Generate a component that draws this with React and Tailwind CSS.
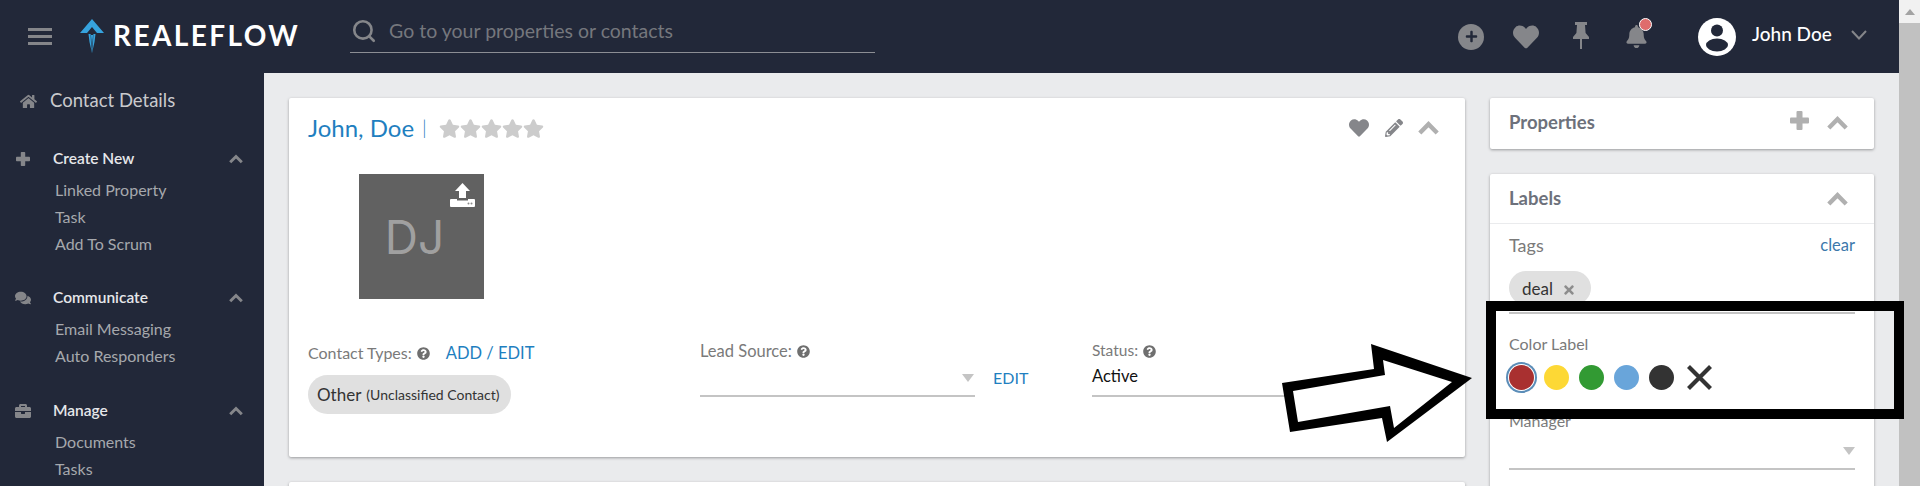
import React from "react";
import { FaHome, FaPlus, FaComments, FaBriefcase, FaStar, FaHeart, FaPencilAlt, FaQuestionCircle, FaBell, FaTimes } from "react-icons/fa";
import { Search } from "lucide-react";

const font = { fontFamily: "Lato, 'Noto Sans', sans-serif" };

function Chevron({ className }) {
  return (
    <svg viewBox="0 0 21 14" className={className} fill="none" stroke="currentColor" strokeWidth="4.4">
      <polyline points="1.8,12 10.5,3.2 19.2,12" />
    </svg>
  );
}

function Plus({ className }) {
  return (
    <svg viewBox="0 0 19 19" className={className} fill="currentColor">
      <rect x="6.5" y="0" width="6" height="19" rx="1" />
      <rect x="0" y="6.5" width="19" height="6" rx="1" />
    </svg>
  );
}

function SideGroup({ icon, title, items, className }) {
  return (
    <div className={className}>
      <div className="flex h-[26px] items-center pr-[21px]">
        <span className="flex w-[53px] justify-center pr-[7px] text-[#85868a]">{icon}</span>
        <span className="flex-1 text-[15.5px] font-semibold text-[#e6e7ea]">{title}</span>
        <Chevron className="h-[10px] w-[14px] text-[#85868a]" />
      </div>
      <ul className="mt-[4px] pl-[55px]">
        {items.map((t) => (
          <li key={t} className="h-[27px] text-[16px] leading-[27px] text-[#a6a8ad]">{t}</li>
        ))}
      </ul>
    </div>
  );
}

function Help() {
  return <FaQuestionCircle className="ml-[5px] text-[13px] text-[#6f6f6f]" />;
}

function Tri() {
  return <span className="h-0 w-0 border-x-[6px] border-t-[8px] border-x-transparent border-t-[#c4c4c4]" />;
}

function Logo() {
  return (
    <svg width="24" height="34" viewBox="0 0 24 34" className="shrink-0">
      <path d="M12 0 L24 14 L17 14 L12 8 L7 14 L0 14 Z" fill="#36a3de" />
      <path d="M8.5 15 L10.6 15 L11 24 L12 33 L13 24 L13.4 15 L15.5 15 L14.5 23 L12 34 L9.5 23 Z" fill="#36a3de" />
      <path d="M11 16 H13 L12 30 Z" fill="#36a3de" />
    </svg>
  );
}

function Avatar() {
  return (
    <svg width="38" height="38" viewBox="0 0 38 38">
      <circle cx="19" cy="19" r="19" fill="#fff" />
      <circle cx="19" cy="12.5" r="6" fill="#222839" />
      <ellipse cx="19" cy="27" rx="11" ry="6.5" fill="#222839" />
    </svg>
  );
}

function Pin() {
  return (
    <svg width="16" height="27" viewBox="0 0 16 27" fill="#85868a">
      <rect x="2" y="0" width="12" height="3" />
      <path d="M4 3 H12 L12.6 11 L16 15 V17 H0 V15 L3.4 11 Z" />
      <rect x="7" y="17" width="2" height="10" />
    </svg>
  );
}

function Upload() {
  return (
    <svg width="25" height="24" viewBox="0 0 25 24">
      <path d="M12.5 0 L20 8 H16 V15 H9 V8 H5 Z" fill="#fff" />
      <path d="M1 16 H7 V17.5 H18 V16 H24 a1 1 0 0 1 1 1 V23 a1 1 0 0 1 -1 1 H1 a1 1 0 0 1 -1 -1 V17 a1 1 0 0 1 1 -1 Z" fill="#fff" />
      <circle cx="18.5" cy="20.5" r="1" fill="#8a8a8a" />
      <circle cx="21.5" cy="20.5" r="1" fill="#8a8a8a" />
    </svg>
  );
}

function Dot({ className }) {
  return <span className={`h-[25px] w-[25px] shrink-0 rounded-full ${className}`} />;
}

export default function App() {
  return (
    <div className="relative flex h-[486px] w-full overflow-hidden bg-white" style={font}>
      <div className="flex min-w-0 flex-1 flex-col">
        <header className="flex h-[73px] shrink-0 items-center bg-[#222839]">
          <div className="ml-[28px] flex w-[24px] flex-col gap-[4px]">
            <span className="h-[3px] bg-[#85868a]" />
            <span className="h-[3px] bg-[#85868a]" />
            <span className="h-[3px] bg-[#85868a]" />
          </div>
          <span className="ml-[28px] mb-[2px]"><Logo /></span>
          <span className="ml-[9px] mb-[3px] text-[28px] font-bold leading-none tracking-[2.4px] text-white">REALEFLOW</span>
          <div className="mb-[11px] ml-[50px] flex h-[44px] w-[525px] items-center border-b border-[#8c8e94] pl-[1px]">
            <Search className="h-[26px] w-[26px] text-[#85868a]" strokeWidth={2.4} />
            <span className="ml-[12px] text-[19.5px] text-[#75777d]">Go to your properties or contacts</span>
          </div>
          <div className="ml-auto flex items-center">
            <span className="relative flex h-[26px] w-[26px] items-center justify-center rounded-full bg-[#85868a]">
              <FaPlus className="text-[13px] text-[#222839]" />
            </span>
            <FaHeart className="ml-[29px] text-[26px] text-[#85868a]" />
            <span className="ml-[34px] mb-[2px] flex"><Pin /></span>
            <span className="relative ml-[37px] flex">
              <FaBell className="h-[23px] w-[21px] text-[#85868a]" />
              <span className="absolute right-[-5px] top-[-7px] h-[13px] w-[13px] rounded-full border border-white bg-[#df6c6c]" />
            </span>
            <span className="ml-[51px]"><Avatar /></span>
            <span className="mb-[4px] ml-[16px] w-[99px] text-[19px] font-medium text-white">John Doe</span>
            <svg viewBox="0 0 16 10" className="mb-[4px] mr-[32px] h-[10px] w-[16px] text-[#85868a]" fill="none" stroke="currentColor" strokeWidth="2">
              <polyline points="1,1 8,8.5 15,1" />
            </svg>
          </div>
        </header>
        <div className="flex min-h-0 flex-1">
          <aside className="w-[264px] shrink-0 overflow-hidden bg-[#222839] pt-[15px]">
            <div className="flex h-[26px] items-center">
              <FaHome className="ml-[20px] text-[17px] text-[#85868a]" />
              <span className="ml-[13px] text-[18.5px] text-[#c9cacd]">Contact Details</span>
            </div>
            <SideGroup className="mt-[32px]" icon={<Plus className="h-[14px] w-[14px]" />} title="Create New" items={["Linked Property", "Task", "Add To Scrum"]} />
            <SideGroup className="mt-[28px]" icon={<FaComments className="text-[16px]" />} title="Communicate" items={["Email Messaging", "Auto Responders"]} />
            <SideGroup className="mt-[29px]" icon={<FaBriefcase className="text-[16px]" />} title="Manage" items={["Documents", "Tasks"]} />
          </aside>
          <main className="flex min-w-0 flex-1 gap-[25px] overflow-hidden bg-[#eaebed] pl-[25px] pt-[25px]">
            <div className="flex w-[1176px] shrink-0 flex-col gap-[25px]">
              <section className="h-[359px] shrink-0 rounded-[2px] bg-white pl-[19px] shadow-[0_1px_3px_rgba(0,0,0,0.35)]">
                <div className="flex h-[56px] items-center pr-[26px] pt-[4px]">
                  <span className="text-[24px] text-[#1f7fc0]">John, Doe</span>
                  <span className="ml-[8px] mb-[2px] text-[20px] font-light text-[#1f7fc0]">|</span>
                  <span className="ml-[12px] flex text-[21px] text-[#cccccc]">
                    <FaStar /><FaStar /><FaStar /><FaStar /><FaStar />
                  </span>
                  <FaHeart className="ml-auto text-[20px] text-[#85868a]" />
                  <FaPencilAlt className="ml-[16px] text-[18px] text-[#85868a]" />
                  <Chevron className="ml-[15px] h-[14px] w-[21px] text-[#b0b0b0]" />
                </div>
                <div className="relative ml-[51px] mt-[20px] flex h-[125px] w-[125px] items-center justify-center bg-[#616161] pr-[14px]">
                  <span className="font-['Inter'] text-[46px] font-normal leading-none text-[#a0a0a0]">DJ</span>
                  <span className="absolute right-[9px] top-[9px] flex"><Upload /></span>
                </div>
                <div className="mt-[42px] grid grid-cols-[392px_392px_356px]">
                  <div>
                    <div className="-mt-[1px] flex h-[26px] items-center text-[16px] text-[#7a7a7a]">
                      Contact Types:<Help />
                      <span className="ml-[16px] text-[16.5px] text-[#1f7fc0]">ADD / EDIT</span>
                    </div>
                    <div className="mt-[9px] inline-flex h-[39px] items-center rounded-full bg-[#e0e0e0] pl-[9px] pr-[11px] text-[#333]">
                      <span className="text-[17px]">Other</span>
                      <span className="ml-[5px] text-[14px]">(Unclassified Contact)</span>
                    </div>
                  </div>
                  <div>
                    <div className="flex h-[20px] items-center text-[16.5px] text-[#7a7a7a]">Lead Source:<Help /></div>
                    <div className="flex items-center">
                      <div className="flex h-[36px] w-[275px] items-center justify-end border-b-2 border-[#c4c4c4] pr-[1px]"><Tri /></div>
                      <span className="mb-[3px] ml-[18px] text-[16px] text-[#1f7fc0]">EDIT</span>
                    </div>
                  </div>
                  <div>
                    <div className="flex h-[20px] items-center text-[15.5px] text-[#7a7a7a]">Status:<Help /></div>
                    <div className="flex h-[36px] items-center border-b-2 border-[#c4c4c4] pb-[4px] text-[16.5px] text-[#111]">Active</div>
                  </div>
                </div>
              </section>
              <section className="h-[100px] shrink-0 rounded-[2px] bg-white shadow-[0_1px_3px_rgba(0,0,0,0.35)]" />
            </div>
            <div className="flex w-[384px] shrink-0 flex-col gap-[25px]">
              <section className="flex h-[51px] shrink-0 items-center rounded-[2px] bg-white pb-[2px] pl-[19px] pr-[26px] shadow-[0_1px_3px_rgba(0,0,0,0.35)]">
                <span className="flex-1 text-[18.5px] font-bold text-[#6d717b]">Properties</span>
                <Plus className="mb-[4px] h-[19px] w-[19px] text-[#b0b0b0]" />
                <Chevron className="ml-[18px] h-[14px] w-[21px] text-[#b0b0b0]" />
              </section>
              <section className="h-[400px] shrink-0 rounded-[2px] bg-white shadow-[0_1px_3px_rgba(0,0,0,0.35)]">
                <div className="flex h-[50px] items-center border-b border-[#eaebed] pl-[19px] pr-[26px]">
                  <span className="flex-1 text-[18.5px] font-bold text-[#6d717b]">Labels</span>
                  <Chevron className="h-[14px] w-[21px] text-[#b0b0b0]" />
                </div>
                <div className="pl-[19px] pr-[19px] pt-[11px]">
                  <div className="flex h-[20px] items-center justify-between">
                    <span className="text-[18px] text-[#7a7a7a]">Tags</span>
                    <span className="text-[16.5px] text-[#3c78ab]">clear</span>
                  </div>
                  <div className="mt-[16px] border-b-2 border-[#c4c4c4] pb-[7px]">
                    <div className="inline-flex h-[34px] items-center rounded-full bg-[#e0e0e0] pl-[13px] pr-[15px] pt-[2px] text-[#333]">
                      <span className="text-[17px]">deal</span>
                      <FaTimes className="ml-[9px] mt-[2px] text-[14px] text-[#8d8d8d]" />
                    </div>
                  </div>
                  <div className="mt-[20px] flex h-[20px] items-center text-[16px] text-[#7a7a7a]">Color Label</div>
                  <div className="mt-[11px] flex h-[25px] items-center gap-[10px]">
                    <span className="h-[25px] w-[25px] shrink-0 rounded-full bg-[#a93030] shadow-[0_0_0_1px_#fff,0_0_0_3px_#5b8db8]" />
                    <Dot className="bg-[#fdd835]" />
                    <Dot className="bg-[#329a33]" />
                    <Dot className="bg-[#69a5da]" />
                    <Dot className="bg-[#333333]" />
                    <svg viewBox="0 0 25 25" className="ml-[3px] h-[25px] w-[25px] text-[#333333]" fill="none" stroke="currentColor" strokeWidth="4.2">
                      <path d="M1.5 1.5 L23.5 23.5 M23.5 1.5 L1.5 23.5" />
                    </svg>
                  </div>
                  <div className="mt-[21px] flex h-[20px] items-center text-[16px] text-[#7a7a7a]">Manager</div>
                  <div className="flex h-[39px] items-center justify-end border-b-2 border-[#c4c4c4] pt-[2px]"><Tri /></div>
                </div>
              </section>
            </div>
          </main>
        </div>
      </div>
      <div className="flex w-[21px] shrink-0 flex-col bg-[#f1f1f1]">
        <div className="flex h-[23px] items-center justify-center">
          <span className="h-0 w-0 border-x-[5px] border-b-[6px] border-x-transparent border-b-[#a3a3a3]" />
        </div>
        <div className="flex-1 bg-[#c1c1c1]" />
      </div>
      <div className="pointer-events-none absolute left-[1486px] top-[301px] h-[118px] w-[418px] border-[10px] border-black" />
      <svg className="pointer-events-none absolute left-[1280px] top-[340px]" width="200" height="110" viewBox="0 0 200 110">
        <polygon points="2,43 94,29 91,4 192,38 107,102 102,78 10,92" fill="#000" />
        <polygon points="13,51 105,35 103,20 172,42 114,88 110,66 18,82" fill="#fff" />
      </svg>
    </div>
  );
}
